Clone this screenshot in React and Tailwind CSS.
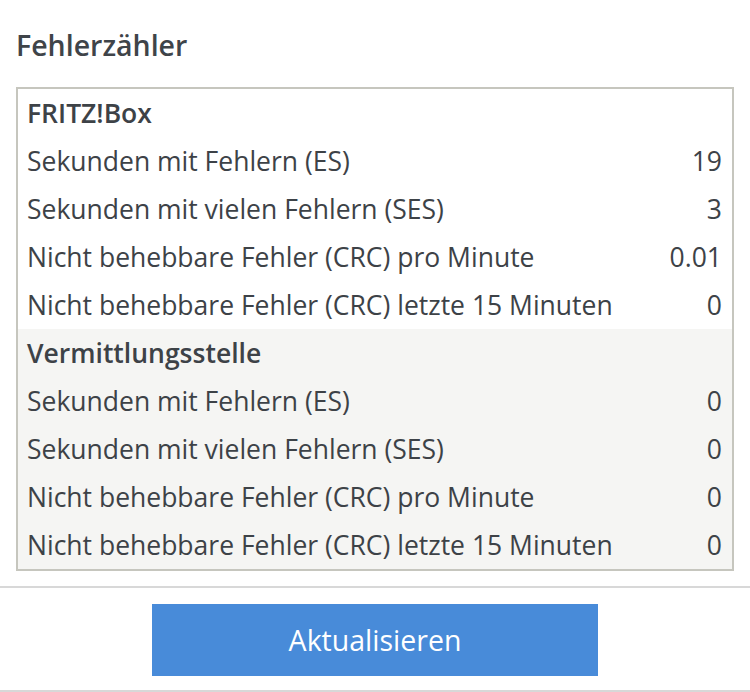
import React from "react";

const fritzbox = [
  ["Sekunden mit Fehlern (ES)", "19"],
  ["Sekunden mit vielen Fehlern (SES)", "3"],
  ["Nicht behebbare Fehler (CRC) pro Minute", "0.01"],
  ["Nicht behebbare Fehler (CRC) letzte 15 Minuten", "0"],
];

const vermittlung = [
  ["Sekunden mit Fehlern (ES)", "0"],
  ["Sekunden mit vielen Fehlern (SES)", "0"],
  ["Nicht behebbare Fehler (CRC) pro Minute", "0"],
  ["Nicht behebbare Fehler (CRC) letzte 15 Minuten", "0"],
];

function Section({ title, rows, shaded }) {
  return (
    <div className={shaded ? "bg-[#f5f5f3]" : "bg-white"}>
      <div className="h-[48px] leading-[48px] pl-[9px] pr-[10px] font-semibold">{title}</div>
      {rows.map(([label, value], i) => (
        <div key={i} className="h-[48px] leading-[48px] pl-[9px] pr-[10px] flex justify-between">
          <span>{label}</span>
          <span>{value}</span>
        </div>
      ))}
    </div>
  );
}

export default function App() {
  return (
    <div
      className="w-[750px] h-[692px] bg-white text-[#3d4247] overflow-hidden"
      style={{ fontFamily: '"Open Sans", sans-serif' }}
    >
      <div className="px-4">
        <h2 className="pt-[26px] leading-[39px] text-[28.5px] font-semibold text-[#3f4449] mb-[22px]">
          Fehlerzähler
        </h2>
        <div className="w-[718px] border-2 border-[#c6c6be] text-[26.5px]">
          <Section title="FRITZ!Box" rows={fritzbox} />
          <Section title="Vermittlungsstelle" rows={vermittlung} shaded />
        </div>
      </div>
      <div className="mt-[15px] border-t-2 border-[#d8d8d8]" />
      <div className="flex justify-center pt-[16px] pb-[14px]">
        <button className="w-[446px] h-[72px] bg-[#488bd9] text-white text-[28.5px]">
          Aktualisieren
        </button>
      </div>
      <div className="border-t-2 border-[#d8d8d8]" />
    </div>
  );
}
